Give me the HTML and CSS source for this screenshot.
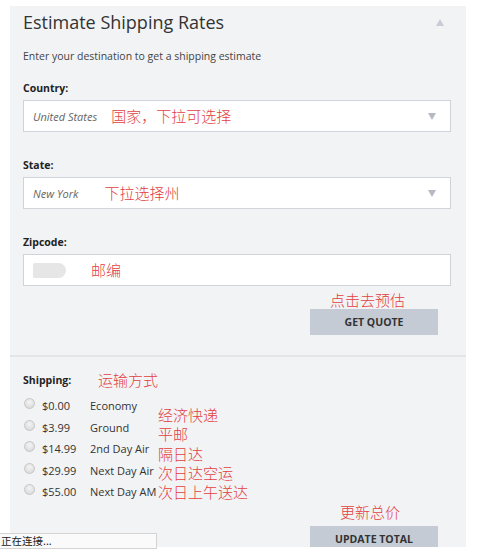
FILE: index.html
```html
<!DOCTYPE html>
<html>
<head>
<meta charset="utf-8">
<link rel="stylesheet" href="styles.css">
</head>
<body>
<div class="panel">
  <div class="top">
    <div class="title-row">
      <h2 class="title">Estimate Shipping Rates</h2>
      <span class="tri-up"></span>
    </div>
    <p class="sub">Enter your destination to get a shipping estimate</p>

    <div class="label first">Country:</div>
    <div class="field">
      <span class="val">United States</span>
      <span class="note note-country">国家，下拉可选择</span>
      <span class="tri-down"></span>
    </div>

    <div class="label">State:</div>
    <div class="field">
      <span class="val">New York</span>
      <span class="note note-state">下拉选择州</span>
      <span class="tri-down"></span>
    </div>

    <div class="label">Zipcode:</div>
    <div class="field">
      <span class="blob"></span>
      <span class="note note-zip">邮编</span>
    </div>

    <div class="action action-quote">
      <span class="note">点击去预估</span>
      <button class="btn">GET QUOTE</button>
    </div>
  </div>

  <div class="bottom">
    <div class="ship-head">
      <span class="label-inline">Shipping:</span>
      <span class="note">运输方式</span>
    </div>
    <div class="ship-body">
      <ul class="rates">
        <li><span class="radio"></span><span class="price">$0.00</span><span class="name">Economy</span></li>
        <li><span class="radio"></span><span class="price">$3.99</span><span class="name">Ground</span></li>
        <li><span class="radio"></span><span class="price">$14.99</span><span class="name">2nd Day Air</span></li>
        <li><span class="radio"></span><span class="price">$29.99</span><span class="name">Next Day Air</span></li>
        <li><span class="radio"></span><span class="price">$55.00</span><span class="name">Next Day AM</span></li>
      </ul>
      <ul class="notes">
        <li>经济快递</li>
        <li>平邮</li>
        <li>隔日达</li>
        <li>次日达空运</li>
        <li>次日上午送达</li>
      </ul>
    </div>
    <div class="action action-total">
      <span class="note">更新总价</span>
      <button class="btn">UPDATE TOTAL</button>
    </div>
  </div>
</div>
<div class="status">正在连接...</div>
</body>
</html>
```

FILE: styles.css
```css
* { box-sizing: border-box; }
html, body { margin: 0; padding: 0; background: #fff; }
body {
  font-family: "Open Sans", "Noto Sans CJK SC", sans-serif;
  color: #333;
  height: 557px;
  overflow: hidden;
}
.panel {
  width: 456px;
  height: 541px;
  margin: 6px 0 0 10px;
  background: #f2f3f5;
  overflow: hidden;
}
.top {
  padding: 4px 15px 20px 13px;
  border-bottom: 2px solid #e3e5e9;
}
.title-row {
  display: flex;
  align-items: center;
  justify-content: space-between;
  height: 24px;
}
.title {
  margin: 0;
  font-size: 18px;
  font-weight: 400;
  color: #333;
  line-height: 24px;
}
.tri-up {
  width: 0; height: 0;
  border-left: 4px solid transparent;
  border-right: 4px solid transparent;
  border-bottom: 7px solid #c8ccd4;
  margin-right: 7px;
}
.sub {
  margin: 14px 0 0;
  font-size: 10.5px;
  line-height: 16px;
  color: #444;
}
.label {
  margin-top: 25px;
  font-size: 10.5px;
  font-weight: 700;
  line-height: 16px;
  color: #222;
}
.label.first { margin-top: 16px; }
.field {
  margin-top: 4px;
  height: 32px;
  background: #fff;
  border: 1px solid #cfd3da;
  display: flex;
  align-items: center;
  padding: 0 14px 0 9px;
}
.val {
  font-size: 11px;
  font-style: italic;
  color: #666;
}
.note {
  font-family: "Noto Sans CJK SC", sans-serif;
  font-size: 15px;
  font-weight: 300;
  line-height: 16px;
  color: #e2403d;
}
.note-country { margin-left: 14px; }
.note-state { margin-left: 26px; }
.note-zip { margin-left: 25px; }
.tri-down {
  margin-left: auto;
  width: 0; height: 0;
  border-left: 4px solid transparent;
  border-right: 4px solid transparent;
  border-top: 7px solid #b4b9c3;
}
.blob {
  width: 33px;
  height: 15px;
  background: #e6e6e6;
  border-radius: 2px 8px 8px 2px;
}
.action {
  display: flex;
  flex-direction: column;
  align-items: flex-start;
  width: 128px;
  margin: 6px 13px 0 auto;
}
.action-quote .note { margin-left: 20px; }
.btn {
  margin-top: 1px;
  width: 128px;
  height: 26px;
  border: 0;
  background: #c4cbd4;
  font-family: "Open Sans", sans-serif;
  font-size: 10.5px;
  font-weight: 700;
  color: #333;
  padding: 0;
}
.bottom {
  padding: 15px 15px 0 13px;
}
.ship-head {
  display: flex;
  align-items: center;
  height: 16px;
}
.label-inline {
  font-size: 10.5px;
  font-weight: 700;
  color: #222;
  width: 75px;
}
.ship-body {
  display: flex;
  margin-top: 7px;
}
.rates, .notes {
  list-style: none;
  margin: 0;
  padding: 0;
}
.rates li {
  display: flex;
  align-items: center;
  height: 21.5px;
  font-size: 11px;
  color: #333;
}
.radio {
  width: 11px;
  height: 11px;
  border-radius: 50%;
  border: 1px solid #c6c6c6;
  background: radial-gradient(circle at 50% 35%, #f4f4f4 0%, #dedede 70%, #cfcfcf 100%);
  margin: 0 7px 0 1px;
  position: relative;
  top: -2px;
}
.price { width: 48px; }
.name { width: 68px; white-space: nowrap; }
.notes {
  padding-top: 10px;
  font-family: "Noto Sans CJK SC", sans-serif;
  font-size: 15px;
  font-weight: 300;
  color: #e2403d;
}
.notes li {
  height: 19.25px;
  line-height: 19.25px;
}
.action-total { margin-top: 1.5px; }
.action-total .note { margin-left: 30px; }
.action-total .btn { margin-top: 6px; }
.status {
  position: fixed;
  left: 0;
  top: 533px;
  width: 157px;
  height: 16px;
  padding-left: 1px;
  background: #fafafa;
  border: 1px solid #d4d4d4;
  border-left: 0;
  font-family: "Noto Sans CJK SC", sans-serif;
  font-size: 10.5px;
  line-height: 14px;
  color: #222;
}
```
